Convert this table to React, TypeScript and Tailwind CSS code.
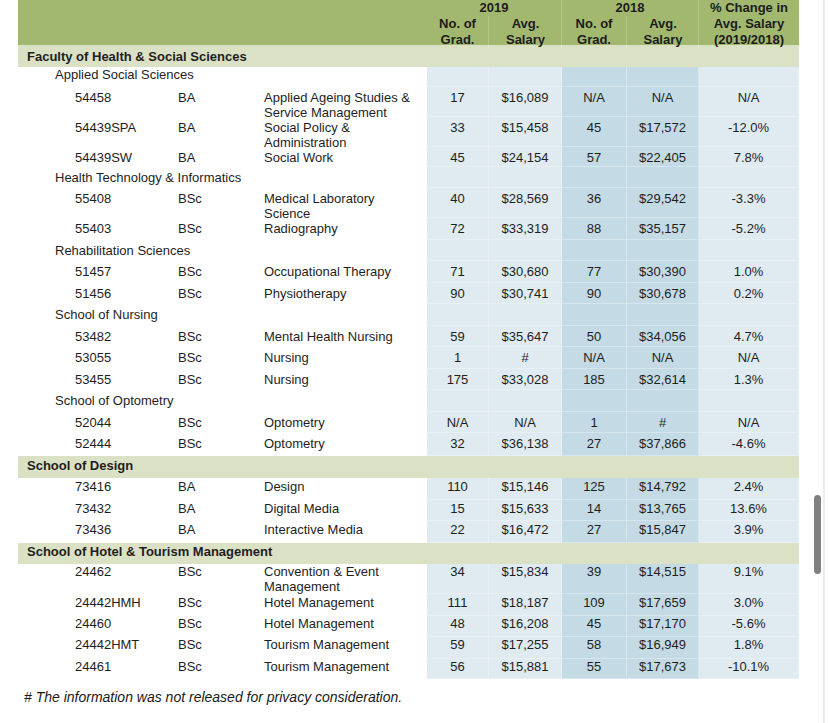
import React from "react";

type DataRow = {
  kind: "data";
  code: string;
  deg: string;
  prog: string[];
  v: [string, string, string, string, string];
  cls: string;
};
type LabelRow = { kind: "band" | "sub"; label: string; cls: string };
type Row = DataRow | LabelRow;

const rows: Row[] = [
  { kind: "band", label: "Faculty of Health & Social Sciences", cls: "h-[22px] pt-[4px]" },
  { kind: "sub", label: "Applied Social Sciences", cls: "h-[20px] pt-0" },
  { kind: "data", code: "54458", deg: "BA", prog: ["Applied Ageing Studies &", "Service Management"], v: ["17", "$16,089", "N/A", "N/A", "N/A"], cls: "h-[30px] pt-[3px]" },
  { kind: "data", code: "54439SPA", deg: "BA", prog: ["Social Policy &", "Administration"], v: ["33", "$15,458", "45", "$17,572", "-12.0%"], cls: "h-[30px] pt-[3px]" },
  { kind: "data", code: "54439SW", deg: "BA", prog: ["Social Work"], v: ["45", "$24,154", "57", "$22,405", "7.8%"], cls: "h-[20px] pt-[3px]" },
  { kind: "sub", label: "Health Technology & Informatics", cls: "h-[21px] pt-[3px]" },
  { kind: "data", code: "55408", deg: "BSc", prog: ["Medical Laboratory", "Science"], v: ["40", "$28,569", "36", "$29,542", "-3.3%"], cls: "h-[30px] pt-[3px]" },
  { kind: "data", code: "55403", deg: "BSc", prog: ["Radiography"], v: ["72", "$33,319", "88", "$35,157", "-5.2%"], cls: "h-[21.5px] pt-[3px]" },
  { kind: "sub", label: "Rehabilitation Sciences", cls: "h-[21.5px] pt-[3px]" },
  { kind: "data", code: "51457", deg: "BSc", prog: ["Occupational Therapy"], v: ["71", "$30,680", "77", "$30,390", "1.0%"], cls: "h-[21.5px] pt-[3px]" },
  { kind: "data", code: "51456", deg: "BSc", prog: ["Physiotherapy"], v: ["90", "$30,741", "90", "$30,678", "0.2%"], cls: "h-[21.5px] pt-[3px]" },
  { kind: "sub", label: "School of Nursing", cls: "h-[21.5px] pt-[3px]" },
  { kind: "data", code: "53482", deg: "BSc", prog: ["Mental Health Nursing"], v: ["59", "$35,647", "50", "$34,056", "4.7%"], cls: "h-[21.5px] pt-[3px]" },
  { kind: "data", code: "53055", deg: "BSc", prog: ["Nursing"], v: ["1", "#", "N/A", "N/A", "N/A"], cls: "h-[21.5px] pt-[3px]" },
  { kind: "data", code: "53455", deg: "BSc", prog: ["Nursing"], v: ["175", "$33,028", "185", "$32,614", "1.3%"], cls: "h-[21.5px] pt-[3px]" },
  { kind: "sub", label: "School of Optometry", cls: "h-[21.5px] pt-[3px]" },
  { kind: "data", code: "52044", deg: "BSc", prog: ["Optometry"], v: ["N/A", "N/A", "1", "#", "N/A"], cls: "h-[21.5px] pt-[3px]" },
  { kind: "data", code: "52444", deg: "BSc", prog: ["Optometry"], v: ["32", "$36,138", "27", "$37,866", "-4.6%"], cls: "h-[23px] pt-[3px]" },
  { kind: "band", label: "School of Design", cls: "h-[22px] pt-[2px]" },
  { kind: "data", code: "73416", deg: "BA", prog: ["Design"], v: ["110", "$15,146", "125", "$14,792", "2.4%"], cls: "h-[21.5px] pt-[1px]" },
  { kind: "data", code: "73432", deg: "BA", prog: ["Digital Media"], v: ["15", "$15,633", "14", "$13,765", "13.6%"], cls: "h-[21.5px] pt-[1px]" },
  { kind: "data", code: "73436", deg: "BA", prog: ["Interactive Media"], v: ["22", "$16,472", "27", "$15,847", "3.9%"], cls: "h-[21.5px] pt-[1px]" },
  { kind: "band", label: "School of Hotel & Tourism Management", cls: "h-[21.5px] pt-[1px]" },
  { kind: "data", code: "24462", deg: "BSc", prog: ["Convention & Event", "Management"], v: ["34", "$15,834", "39", "$14,515", "9.1%"], cls: "h-[30px] pt-0" },
  { kind: "data", code: "24442HMH", deg: "BSc", prog: ["Hotel Management"], v: ["111", "$18,187", "109", "$17,659", "3.0%"], cls: "h-[21.5px] pt-[0.5px]" },
  { kind: "data", code: "24460", deg: "BSc", prog: ["Hotel Management"], v: ["48", "$16,208", "45", "$17,170", "-5.6%"], cls: "h-[21.5px] pt-0" },
  { kind: "data", code: "24442HMT", deg: "BSc", prog: ["Tourism Management"], v: ["59", "$17,255", "58", "$16,949", "1.8%"], cls: "h-[21.5px] pt-0" },
  { kind: "data", code: "24461", deg: "BSc", prog: ["Tourism Management"], v: ["56", "$15,881", "55", "$17,673", "-10.1%"], cls: "h-[20.5px] pt-0" },
];

const GRID = "grid grid-cols-[409px_62px_73px_65px_72px_100px]";
const LIGHT = "bg-[#dfeaf1]";
const DARK = "bg-[#c4dbe5]";
const cellBg = [LIGHT, LIGHT, DARK, DARK, LIGHT];

function Header() {
  return (
    <div className={`${GRID} h-[45px] bg-[#a3b86f] font-bold leading-[16px] text-[#1c1c1c]`}>
      <div />
      <div className="col-span-2 flex flex-col border-r border-white/20">
        <div className="text-center">2019</div>
        <div className="grid grid-cols-[62px_73px]">
          <div className="text-center border-r border-white/20">No. of<br />Grad.</div>
          <div className="text-center">Avg.<br />Salary</div>
        </div>
      </div>
      <div className="col-span-2 flex flex-col border-r border-white/20">
        <div className="text-center">2018</div>
        <div className="grid grid-cols-[65px_72px]">
          <div className="text-center border-r border-white/20">No. of<br />Grad.</div>
          <div className="text-center">Avg.<br />Salary</div>
        </div>
      </div>
      <div className="text-center">% Change in<br />Avg. Salary<br />(2019/2018)</div>
    </div>
  );
}

function RowView({ r }: { r: Row }) {
  if (r.kind === "band") {
    return (
      <div className={`${r.cls} bg-[#dbe1c4] pl-[9px] font-bold leading-[15px]`}>{r.label}</div>
    );
  }
  if (r.kind === "sub") {
    return (
      <div className={`${GRID} ${r.cls.split(" ")[0]}`}>
        <div className={`${r.cls} pl-[37px] leading-[15px]`}>{r.label}</div>
        {cellBg.map((bg, i) => (
          <div key={i} className={`${bg} border-b border-r border-white/30`} />
        ))}
      </div>
    );
  }
  return (
    <div className={`${GRID} ${r.cls.split(" ")[0]}`}>
      <div className={`${r.cls} grid grid-cols-[103px_86px_1fr] pl-[57px] leading-[15px]`}>
        <div>{r.code}</div>
        <div>{r.deg}</div>
        <div>
          {r.prog.map((p, i) => (
            <div key={i} className="whitespace-nowrap">{p}</div>
          ))}
        </div>
      </div>
      {r.v.map((val, i) => (
        <div key={i} className={`${r.cls} ${cellBg[i]} border-b border-r border-white/30 text-center leading-[15px]`}>
          {val}
        </div>
      ))}
    </div>
  );
}

export default function App() {
  return (
    <div className="relative w-[828px] h-[723px] overflow-hidden bg-white text-[13px] text-[#1e1e1e] font-['Liberation_Sans',Arial,sans-serif]">
      <div className="ml-[18px] w-[781px]">
        <Header />
        {rows.map((r, i) => (
          <RowView key={i} r={r} />
        ))}
      </div>
      <div className="mt-[10px] pl-[24px] text-[14px] italic leading-[16px] text-[#1a1a1a]">
        # The information was not released for privacy consideration.
      </div>
      <div className="absolute left-[823px] top-0 h-full w-[2px] bg-[#ececec]" />
      <div className="absolute left-[814px] top-[495px] h-[79px] w-[7px] rounded-full bg-[#808080]" />
    </div>
  );
}
